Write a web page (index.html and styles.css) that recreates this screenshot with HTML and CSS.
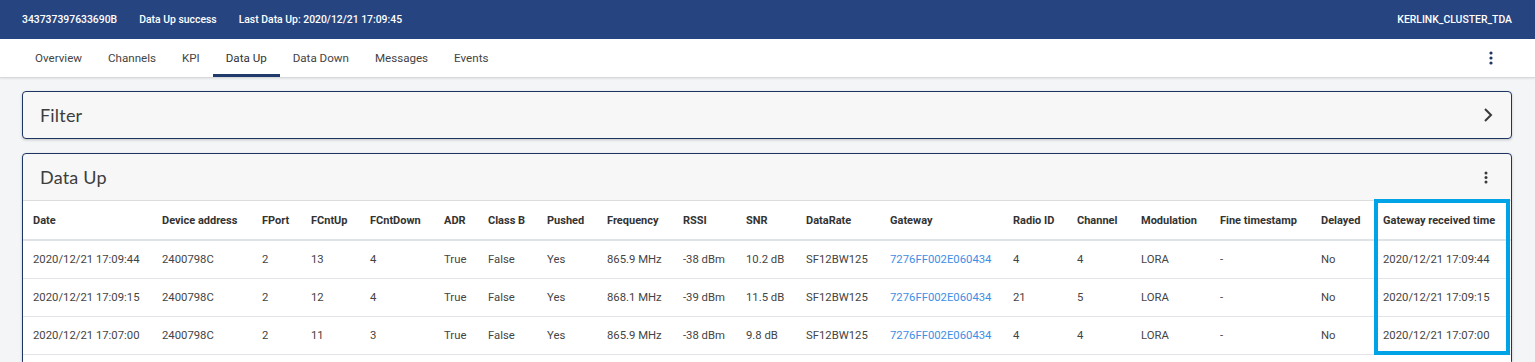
FILE: index.html
```html
<!DOCTYPE html>
<html>
<head>
<meta charset="utf-8">
<link rel="stylesheet" href="styles.css">
</head>
<body>
<header class="topbar">
  <div class="topinfo">
    <span>343737397633690B</span>
    <span>Data Up success</span>
    <span>Last Data Up: 2020/12/21 17:09:45</span>
  </div>
  <span class="cluster">KERLINK_CLUSTER_TDA</span>
</header>
<nav class="tabs">
  <div class="tablist">
    <a class="tab">Overview</a>
    <a class="tab">Channels</a>
    <a class="tab">KPI</a>
    <a class="tab active">Data Up</a>
    <a class="tab">Data Down</a>
    <a class="tab">Messages</a>
    <a class="tab">Events</a>
  </div>
  <svg class="kebab" width="4" height="14" viewBox="0 0 4 14"><circle cx="2" cy="2" r="1.6"/><circle cx="2" cy="7" r="1.6"/><circle cx="2" cy="12" r="1.6"/></svg>
</nav>
<main class="content">
  <section class="card">
    <div class="card-head">
      <h2 class="card-title">Filter</h2>
      <svg class="chev" width="10" height="16" viewBox="0 0 10 16"><path d="M2 2 L8 8 L2 14" fill="none" stroke="#3a3a3a" stroke-width="2"/></svg>
    </div>
  </section>
  <section class="card data-card">
    <div class="card-head">
      <h2 class="card-title">Data Up</h2>
      <svg class="kebab small" width="4" height="13" viewBox="0 0 4 13"><circle cx="2" cy="2" r="1.5"/><circle cx="2" cy="6.5" r="1.5"/><circle cx="2" cy="11" r="1.5"/></svg>
    </div>
    <div class="table-wrap">
      <table class="grid">
        <colgroup>
          <col class="w129"><col class="w100"><col class="w49"><col class="w59"><col class="w74"><col class="w44"><col class="w59"><col class="w60"><col class="w76"><col class="w63"><col class="w60"><col class="w84"><col class="w123"><col class="w64"><col class="w64"><col class="w79"><col class="w101"><col class="w62"><col class="w138">
        </colgroup>
        <thead>
          <tr>
            <th>Date</th><th>Device address</th><th>FPort</th><th>FCntUp</th><th>FCntDown</th><th>ADR</th><th>Class B</th><th>Pushed</th><th>Frequency</th><th>RSSI</th><th>SNR</th><th>DataRate</th><th>Gateway</th><th>Radio ID</th><th>Channel</th><th>Modulation</th><th>Fine timestamp</th><th>Delayed</th><th>Gateway received time</th>
          </tr>
        </thead>
        <tbody>
          <tr>
            <td>2020/12/21 17:09:44</td><td>2400798C</td><td>2</td><td>13</td><td>4</td><td>True</td><td>False</td><td>Yes</td><td>865.9 MHz</td><td>-38 dBm</td><td>10.2 dB</td><td>SF12BW125</td><td><a class="link">7276FF002E060434</a></td><td>4</td><td>4</td><td>LORA</td><td>-</td><td>No</td><td>2020/12/21 17:09:44</td>
          </tr>
          <tr>
            <td>2020/12/21 17:09:15</td><td>2400798C</td><td>2</td><td>12</td><td>4</td><td>True</td><td>False</td><td>Yes</td><td>868.1 MHz</td><td>-39 dBm</td><td>11.5 dB</td><td>SF12BW125</td><td><a class="link">7276FF002E060434</a></td><td>21</td><td>5</td><td>LORA</td><td>-</td><td>No</td><td>2020/12/21 17:09:15</td>
          </tr>
          <tr>
            <td>2020/12/21 17:07:00</td><td>2400798C</td><td>2</td><td>11</td><td>3</td><td>True</td><td>False</td><td>Yes</td><td>865.9 MHz</td><td>-38 dBm</td><td>9.8 dB</td><td>SF12BW125</td><td><a class="link">7276FF002E060434</a></td><td>4</td><td>4</td><td>LORA</td><td>-</td><td>No</td><td>2020/12/21 17:07:00</td>
          </tr>
          <tr class="spacer"><td colspan="19"></td></tr>
        </tbody>
      </table>
      <div class="highlight"></div>
    </div>
  </section>
</main>
</body>
</html>
```

FILE: styles.css
```css
* { box-sizing: border-box; }
html, body { margin: 0; padding: 0; }
body {
  background: #f4f5f7;
  font-family: Roboto, "Liberation Sans", Arial, sans-serif;
  font-size: 11px;
  color: #444;
  overflow: hidden;
}
.topbar {
  height: 39px;
  background: #264580;
  color: #fff;
  display: flex;
  align-items: center;
  justify-content: space-between;
  padding: 0 23px 0 22px;
  font-weight: 500;
  font-size: 10.4px;
}
.topinfo { display: flex; gap: 22px; }
.tabs {
  height: 39px;
  background: #fff;
  display: flex;
  align-items: stretch;
  justify-content: space-between;
  padding: 0 42px 0 22px;
  border-bottom: 1px solid #d6d8db;
  box-shadow: 0 1px 2px rgba(0,0,0,0.08);
}
.tablist { display: flex; }
.tab {
  display: flex;
  align-items: center;
  padding: 0 13px;
  color: #444;
  font-size: 11.6px;
  border-bottom: 3px solid transparent;
  padding-top: 3px;
}
.tab.active { border-bottom-color: #1f3a6b; color: #333; }
.kebab { align-self: center; fill: #1f3563; }
.kebab.small { fill: #3a3a3a; }
.content {
  padding: 13px 23px 0 22px;
  display: flex;
  flex-direction: column;
  gap: 14px;
}
.card {
  background: #f7f7f7;
  border: 1px solid #1e3461;
  border-radius: 4px;
  box-shadow: 0 1px 3px rgba(0,0,0,0.2);
  position: relative;
}
.card-head {
  height: 46px;
  display: flex;
  align-items: center;
  justify-content: space-between;
  padding: 0 18px 1px 17px;
}
.data-card .card-head { height: 47px; padding-right: 23px; padding-bottom: 0; border-bottom: 1px solid #dcdcdc; }
.card-title {
  margin: 0;
  font-family: Lato, "Open Sans", sans-serif;
  font-weight: 400;
  font-size: 18px;
  color: #3d3d3d;
  letter-spacing: 0.2px;
}
.table-wrap { position: relative; background: #fff; }
.grid {
  width: 100%;
  table-layout: fixed;
  border-collapse: collapse;
}
.grid th, .grid td {
  text-align: left;
  padding: 0 0 0 10px;
  white-space: nowrap;
  overflow: hidden;
}
.grid th {
  height: 39px;
  font-weight: 700;
  color: #333;
  border-bottom: 2px solid #dfe2e6;
}
.grid td {
  height: 38px;
  color: #444;
  font-size: 11.3px;
  border-bottom: 1px solid #e2e4e8;
}
.grid .spacer td { height: 10px; border-bottom: 0; }
.link { color: #3d8ee6; }
.highlight {
  position: absolute;
  left: 1351px;
  top: -2px;
  width: 136px;
  height: 156px;
  border: 4px solid #00a4e6;
  pointer-events: none;
}
.w129 { width: 129px; } .w100 { width: 100px; } .w49 { width: 49px; }
.w59 { width: 59px; } .w74 { width: 74px; } .w44 { width: 44px; }
.w60 { width: 60px; } .w76 { width: 76px; } .w63 { width: 63px; }
.w84 { width: 84px; } .w123 { width: 123px; } .w64 { width: 64px; }
.w79 { width: 79px; } .w101 { width: 101px; } .w62 { width: 62px; }
.w138 { width: 138px; }
```
